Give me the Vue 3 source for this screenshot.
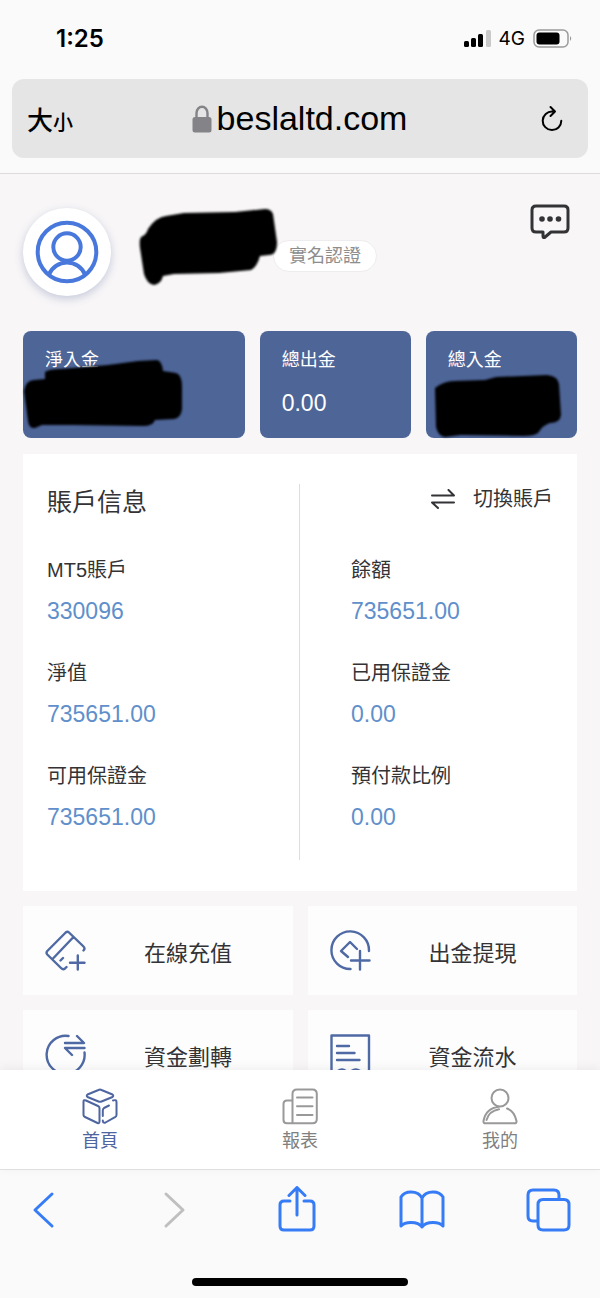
<template>
  <div class="phone">
    <header class="browser-top">
      <div class="status-bar">
        <span class="time">1:25</span>
        <div class="status-right">
          <svg width="27" height="20" viewBox="0 0 27 20" aria-hidden="true">
            <rect x="0" y="12" width="5" height="6" rx="1.5" />
            <rect x="7" y="9" width="5" height="9" rx="1.5" />
            <rect x="14" y="5" width="5" height="13" rx="1.5" />
            <rect x="22" y="1" width="5" height="17" rx="1.5" fill="#c9c9c9" />
          </svg>
          <span class="network">4G</span>
          <svg width="40" height="20" viewBox="0 0 40 20" aria-hidden="true">
            <rect x="1" y="1" width="34" height="17" rx="5" fill="none" stroke="#9b9b9b" stroke-width="1.5" />
            <rect x="3.5" y="3.5" width="23" height="12" rx="3" />
            <path d="M37 7q2.5 2.5 0 5z" fill="#9b9b9b" />
          </svg>
        </div>
      </div>
      <div class="url-bar">
        <button class="text-size">大<small>小</small></button>
        <button class="address">
          <svg width="20" height="28" viewBox="0 0 20 28" aria-hidden="true">
            <path d="M4.5 13V8a5.5 6.2 0 0 1 11 0v5" fill="none" stroke="#838388" stroke-width="2.4" />
            <rect x="0.5" y="12" width="19" height="15.5" rx="2.5" fill="#838388" />
          </svg>
          beslaltd.com
        </button>
        <button class="reload" aria-label="重新載入">
          <svg width="24" height="28" viewBox="0 0 24 28" class="line">
            <path d="M12.5 6.500A9.300 9.300 0 1 0 21.300 15.800M10.500 2L15 6.500L10.500 11" />
          </svg>
        </button>
      </div>
    </header>

    <main class="content">
      <section class="profile">
        <div class="avatar">
          <svg width="64" height="64" viewBox="0 0 64 64" class="line">
            <circle cx="32" cy="32" r="29.300" />
            <circle cx="32" cy="27" r="13.700" />
            <path d="M14 54.500A19.500 19.500 0 0 1 50 54.500" />
          </svg>
        </div>
        <svg class="name-mask" width="140" height="86" viewBox="0 0 140 86" aria-hidden="true">
          <path
            d="M9 20Q17 8 27 7L45 4L96 3L126 0Q132 0 134 5L138 33Q138 46 130 46L121 47Q118 58 112 61L80 64L35 65L24 67Q22 75 15 76Q8 75 5 65L1 39Q0 31 2 28Q8 25 9 20Z"
          />
        </svg>
        <span class="verify-tag">實名認證</span>
        <button class="message" aria-label="訊息">
          <svg width="40" height="36" viewBox="0 0 40 36" class="line">
            <path d="M6 2H34Q38 2 38 6V24Q38 28 34 28H21L14.500 33.500Q13 34 13 32V28H6Q2 28 2 24V6Q2 2 6 2Z" />
            <g fill="#333336" stroke="none">
              <circle cx="12" cy="15" r="2.800" />
              <circle cx="20" cy="15" r="2.800" />
              <circle cx="28.500" cy="15" r="2.800" />
            </g>
          </svg>
        </button>
      </section>

      <section class="stats">
        <div v-for="item in stats" :key="item.label" class="stat-card">
          <h2>{{ item.label }}</h2>
          <p>{{ item.value }}</p>
          <svg v-if="item.mask" class="stat-mask" width="162" height="108" viewBox="0 0 162 108" aria-hidden="true">
            <path :d="item.mask" />
          </svg>
        </div>
      </section>

      <section class="account">
        <div class="account-col">
          <h2>賬戶信息</h2>
          <dl>
            <div v-for="item in leftFields" :key="item.label">
              <dt>{{ item.label }}</dt>
              <dd>{{ item.value }}</dd>
            </div>
          </dl>
        </div>
        <div class="account-col">
          <button class="switch">
            <svg width="24" height="20" viewBox="0 0 24 20" class="line">
              <path d="M1 6.500H23L17.500 1M23 13.500H1L7 19" />
            </svg>
            切換賬戶
          </button>
          <dl>
            <div v-for="item in rightFields" :key="item.label">
              <dt>{{ item.label }}</dt>
              <dd>{{ item.value }}</dd>
            </div>
          </dl>
        </div>
      </section>

      <section class="actions">
        <button v-for="item in actions" :key="item.label" class="action">
          <svg width="41" height="41" viewBox="-0.500 -0.500 41 41" class="line">
            <path :d="item.icon" />
          </svg>
          <span>{{ item.label }}</span>
        </button>
      </section>
    </main>

    <nav class="tab-bar">
      <a v-for="tab in tabs" :key="tab.label" href="#" :class="{ active: tab.label === current }" @click.prevent="current = tab.label">
        <svg width="36" height="37" viewBox="0 0 36 37" class="line">
          <path :d="tab.icon" />
        </svg>
        {{ tab.label }}
      </a>
    </nav>

    <footer class="browser-bottom">
      <div class="tools">
        <button v-for="tool in tools" :key="tool.label" :aria-label="tool.label" :disabled="tool.disabled">
          <svg width="46" height="48" viewBox="0 0 46 48" class="line">
            <path :d="tool.icon" />
          </svg>
        </button>
      </div>
      <div class="home-indicator"></div>
    </footer>
  </div>
</template>

<script setup>
import { ref } from 'vue';

const current = ref('首頁');

const stats = [
  {
    label: '淨入金',
    value: '',
    mask: 'M1 60Q3 49 11 49L22 48V41Q26 38 38 38L85 34L115 30L134 29Q139 30 140 40L153 42Q159 44 159 55V78Q158 87 151 88L132 89Q130 95 120 95L50 94L19 94L12 97Q6 98 5 90Z',
  },
  { label: '總出金', value: '0.00' },
  {
    label: '總入金',
    value: '',
    mask: 'M9 57Q18 50 28 50L59 49L70 46L121 44Q132 45 133 53L135 84Q134 92 124 92Q117 94 112 102Q108 105 98 105L35 104L19 106Q12 105 10 96Z',
  },
];

const leftFields = [
  { label: 'MT5賬戶', value: '330096' },
  { label: '淨值', value: '735651.00' },
  { label: '可用保證金', value: '735651.00' },
];

const rightFields = [
  { label: '餘額', value: '735651.00' },
  { label: '已用保證金', value: '0.00' },
  { label: '預付款比例', value: '0.00' },
];

const actions = [
  {
    label: '在線充值',
    icon: 'M38 20Q40 18 38 16L23.500 2Q22 0.500 20.200 2L1.800 20.500Q0.300 22.300 1.800 24L15.500 37.500Q17.500 39.500 19.500 38L21 36.500M28 6.500L8 27.500M17.500 27.500L15 30M24.500 32.300H39M32.300 25V39',
  },
  {
    label: '出金提現',
    icon: 'M38.500 20.500A18.800 18.800 0 1 0 20 38.500M26.500 18.500L19.500 11.500L10.500 20.500L17.500 26.500M20.500 30H39M29.500 20.500V39',
  },
  {
    label: '資金劃轉',
    icon: 'M23 1.500A19 19 0 1 0 39 18M31.500 1.500L38.500 8.500H19.500M39 13.500H19.500L26.500 20.500',
  },
  {
    label: '資金流水',
    icon: 'M1 39V1H38.500V39M6.500 11.500H18.500M6.500 18.500H24M6.500 25.500H29M1 39L6 37.500Q12 32.500 17 38H19Q25 32.500 31 37.500L38.500 39',
  },
];

const tabs = [
  {
    label: '首頁',
    icon: 'M16.500 2Q18 1.200 19.500 2L30.500 6.500Q32 7.700 30.500 9L19.500 13.500Q18 14.200 16.500 13.500L5.500 9Q4 7.700 5.500 6.500ZM4 12.500L16 18Q17.500 18.700 17.500 20V33.500Q17.500 35.700 15.500 35L3 29Q1.500 28.300 1.500 27V13.500Q1.500 11.500 4 12.500ZM20.800 28V22.500Q20.800 21 22 20L27 17.500M31 12.500Q34.500 11.300 34.500 14V27Q34.500 28.300 33 29.200L23.500 34.500Q20.800 35.500 20.800 32.500',
  },
  {
    label: '報表',
    icon: 'M15 1.500H30.500Q34.800 1.500 34.800 6V31Q34.800 35.300 30.500 35.300H5Q1.500 35.300 1.500 32V16Q1.500 12.500 5 12.500H10.500M15 1.500Q10.500 1.500 10.500 6V35.300M15 9.500H30.500M15 18.300H30.500M15 27H30.500',
  },
  {
    label: '我的',
    icon: 'M18 1.500A8.500 8.500 0 1 1 18 18.500A8.500 8.500 0 1 1 18 1.500ZM17 18.800Q4 20 1.500 33Q1.200 35.300 3.500 35.300H32.500Q34.800 35.300 34.500 33Q32.500 23.500 25 20.500M4.500 32Q7 23 17 21.300',
  },
];

const tools = [
  { label: '返回', icon: 'M31 8L14 24L31 40' },
  { label: '前進', icon: 'M19 8L36 24L19 40', disabled: true },
  {
    label: '分享',
    icon: 'M17 15H11Q7 15 7 19V40Q7 44 11 44H37Q41 44 41 40V19Q41 15 37 15H31M24 29V1.500M16 9.500L24 1.500L32 9.500',
  },
  {
    label: '書籤',
    icon: 'M23 12Q20 6 12 6Q5 6 2 11V40Q5 36.500 12 36.500Q20 36.500 23 41Q26 36.500 34 36.500Q41 36.500 44 40V11Q41 6 34 6Q26 6 23 12V41',
  },
  {
    label: '分頁',
    icon: 'M12 35H8Q3 35 3 30V9Q3 4 8 4H29Q34 4 34 9V13M18 13.500H39Q44 13.500 44 18.500V39Q44 44 39 44H18Q13 44 13 39V18.500Q13 13.500 18 13.500Z',
  },
];
</script>

<style>
body {
  background-color: #f8f6f7;
}
</style>

<style scoped>
.phone {
  display: flex;
  flex-direction: column;
  height: 100vh;
  overflow: hidden;
  color: #333336;
  font-family: "Liberation Sans", "Noto Sans CJK TC", sans-serif;
}

h2,
p,
dl,
dd {
  margin: 0;
}

h2 {
  font-weight: 400;
}

button {
  padding: 0;
  border: none;
  background: none;
  color: inherit;
  font-family: inherit;
  cursor: pointer;
}

svg {
  display: block;
  flex-shrink: 0;
}

.line {
  fill: none;
  stroke: currentColor;
  stroke-width: 2;
  stroke-linecap: round;
  stroke-linejoin: round;
}

.browser-top {
  padding: 0 12px 15px;
  background-color: #fafafa;
  border-bottom: 1px solid #dcdadd;
  color: #000000;
}

.status-bar {
  display: flex;
  justify-content: space-between;
  align-items: center;
  height: 79px;
  padding: 0 15px 2px 44px;
  box-sizing: border-box;
  font-family: Inter, sans-serif;
}

.time {
  font-size: 24px;
  font-weight: 600;
}

.status-right {
  display: flex;
  align-items: center;
  gap: 8px;
}

.network {
  font-size: 19px;
}

.url-bar {
  display: grid;
  grid-template-columns: 1fr auto 1fr;
  align-items: center;
  height: 79px;
  padding: 0 24px 0 15px;
  border-radius: 12px;
  background-color: #e5e5e5;
}

.text-size {
  justify-self: start;
  font-size: 26px;
  font-weight: 500;
}

.text-size small {
  font-size: 20px;
}

.address {
  display: flex;
  align-items: center;
  gap: 5px;
  margin-left: 8px;
  font-size: 34px;
}

.reload {
  justify-self: end;
}

.content {
  flex: 1;
  min-height: 0;
  overflow: hidden;
  padding: 30px 23px 0;
  background-color: #f8f6f7;
}

.profile {
  display: flex;
  align-items: center;
  height: 95px;
  margin-bottom: 32px;
}

.avatar {
  display: flex;
  justify-content: center;
  align-items: center;
  width: 88px;
  height: 88px;
  margin-right: 28px;
  border-radius: 50%;
  background-color: #ffffff;
  box-shadow: 0 3px 8px rgba(78, 101, 152, 0.3);
  color: #4878dc;
}

.avatar .line {
  stroke-width: 4;
}

.name-mask {
  position: relative;
  z-index: 1;
  filter: blur(1px);
}

.verify-tag {
  margin: 8px 0 0 -6px;
  padding: 0 15px;
  border: 1px solid #eeecee;
  border-radius: 16px;
  background-color: #ffffff;
  color: #8d8d8d;
  font-size: 18px;
  line-height: 30px;
}

.message {
  align-self: flex-start;
  margin-left: auto;
  margin-right: 7px;
}

.message .line {
  stroke-width: 3;
}

.stats {
  display: grid;
  grid-template-columns: 22fr 15fr 15fr;
  gap: 15px;
  margin-bottom: 16px;
}

.stat-card {
  position: relative;
  padding: 16px 22px 20px;
  border-radius: 8px;
  background-color: #4e6598;
  color: #ffffff;
}

.stat-card h2 {
  margin-bottom: 15px;
  font-size: 18px;
  line-height: 26px;
}

.stat-card p {
  min-height: 30px;
  font-size: 23px;
  line-height: 30px;
}

.stat-mask {
  position: absolute;
  top: 0;
  left: 0;
  filter: blur(1px);
}

.account {
  display: grid;
  grid-template-columns: 1fr 1fr;
  margin-bottom: 15px;
  padding: 30px 24px 31px;
  background-color: #ffffff;
}

.account-col {
  padding-bottom: 28px;
}

.account-col:first-child {
  border-right: 1px solid #dedede;
}

.account-col:last-child {
  padding-left: 51px;
}

.account-col h2 {
  margin-bottom: 35px;
  font-size: 25px;
  line-height: 36px;
}

.switch {
  display: flex;
  align-items: center;
  gap: 18px;
  margin: 0 0 41px auto;
  font-size: 20px;
  line-height: 30px;
}

.account-col dl {
  display: flex;
  flex-direction: column;
  gap: 32px;
}

.account-col dt {
  margin-bottom: 11px;
  font-size: 20px;
  line-height: 30px;
}

.account-col dd {
  color: #608fcb;
  font-size: 23px;
  line-height: 30px;
}

.actions {
  display: grid;
  grid-template-columns: 1fr 1fr;
  gap: 15px;
}

.action {
  display: flex;
  align-items: center;
  gap: 58px;
  height: 89px;
  padding: 0 22px;
  background-color: #fdfdfd;
  font-size: 22px;
}

.action svg {
  color: #4e69a4;
}

.action .line {
  stroke-width: 2.4;
}

.tab-bar {
  position: relative;
  display: grid;
  grid-template-columns: repeat(3, 1fr);
  height: 99px;
  border-bottom: 1px solid #e0e0e0;
  background-color: #ffffff;
  box-shadow: 0 -2px 10px rgba(0, 0, 0, 0.06);
}

.tab-bar a {
  display: flex;
  flex-direction: column;
  align-items: center;
  gap: 3px;
  padding-top: 18px;
  color: #808080;
  font-size: 18px;
  line-height: 26px;
  text-decoration: none;
}

.tab-bar svg {
  color: #999999;
}

.tab-bar .active,
.tab-bar .active svg {
  color: #4e65a0;
}

.browser-bottom {
  padding: 16px 0 12px;
  background-color: #fafafa;
}

.tools {
  display: flex;
  justify-content: space-between;
  margin-bottom: 44px;
  padding: 0 29px 0 21px;
}

.tools button {
  color: #367cf6;
}

.tools button:disabled {
  color: #bfbfbf;
}

.tools .line {
  stroke-width: 3;
}

.home-indicator {
  width: 36%;
  height: 8px;
  margin: 0 auto;
  border-radius: 4px;
  background-color: #000000;
}
</style>
